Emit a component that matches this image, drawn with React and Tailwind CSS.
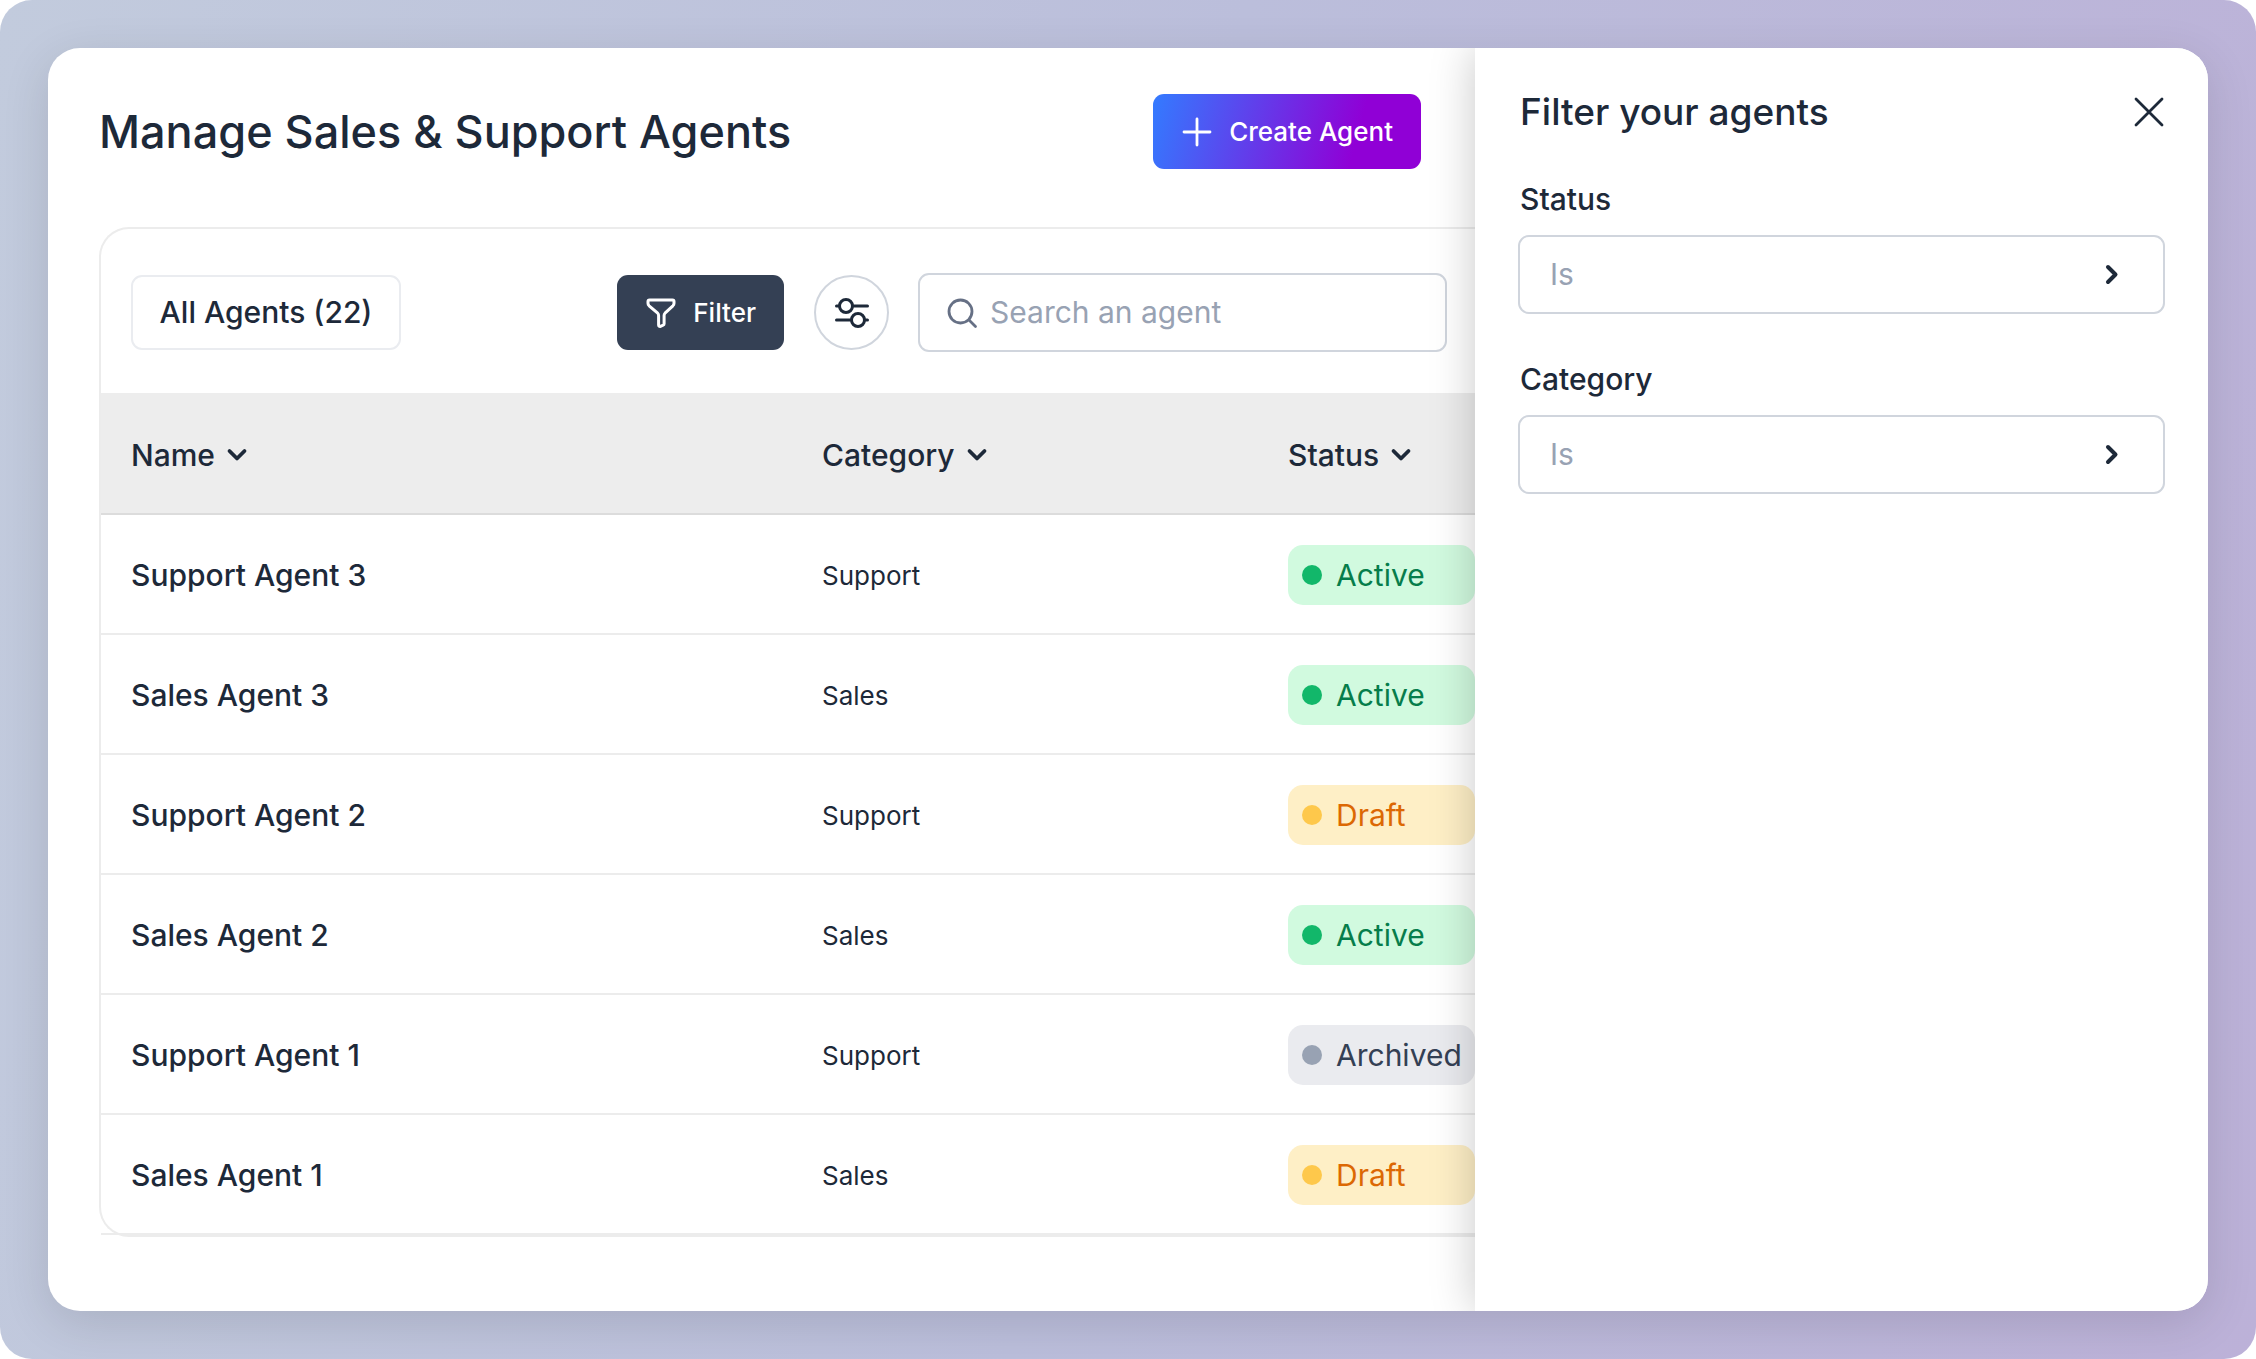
const columns = ['Name', 'Category', 'Status']

const agents = [
  { name: 'Support Agent 3', category: 'Support', status: 'Active' },
  { name: 'Sales Agent 3', category: 'Sales', status: 'Active' },
  { name: 'Support Agent 2', category: 'Support', status: 'Draft' },
  { name: 'Sales Agent 2', category: 'Sales', status: 'Active' },
  { name: 'Support Agent 1', category: 'Support', status: 'Archived' },
  { name: 'Sales Agent 1', category: 'Sales', status: 'Draft' },
]

const badgeStyles = {
  Active: { box: 'bg-[#d1fadf] text-[#067d4b]', dot: 'bg-[#12b76a]' },
  Draft: { box: 'bg-[#feefc6] text-[#dc6803]', dot: 'bg-[#fec84b]' },
  Archived: { box: 'bg-[#eaebef] text-[#344054]', dot: 'bg-[#98a2b3]' },
}

export default function App() {
  return (
    <div className="min-h-screen flex rounded-[32px] p-12 bg-[linear-gradient(100deg,#c2cbdd_0%,#bbbedb_50%,#bcb1d8_100%)] font-['Inter',sans-serif] text-[#1d2939]">
      <div className="flex-1 flex rounded-[32px] overflow-hidden bg-white shadow-[0_12px_48px_rgba(0,0,0,0.12)]">

        <main className="flex-1 min-w-0 pl-[51px]">
          <header className="flex items-center justify-between pt-[46px] pr-[54px]">
            <h1 className="text-[45px] leading-[60px] font-medium">Manage Sales &amp; Support Agents</h1>
            <button className="h-[75px] px-7 flex items-center gap-4 rounded-[11px] text-white text-[26px] font-medium bg-[linear-gradient(105deg,#337bff_0%,#9000d6_75%)]">
              <PlusIcon />
              Create Agent
            </button>
          </header>

          <section className="mt-[58px] border-2 border-r-0 border-[#ececec] rounded-l-[30px]">
            {/* Toolbar */}
            <div className="flex items-center pt-[44px] pb-[41px] pl-[30px] pr-7">
              <button className="h-[75px] w-[270px] rounded-[11px] border-2 border-[#eaecf0] text-[30px] font-medium">All Agents (22)</button>
              <button className="ml-auto h-[75px] px-7 flex items-center gap-4 rounded-[11px] bg-[#344054] text-white text-[26px] font-medium">
                <FunnelIcon />
                Filter
              </button>
              <button aria-label="Table settings" className="ml-[30px] size-[75px] grid place-items-center rounded-full border-2 border-[#d0d5dd]">
                <SlidersIcon />
              </button>
              <label className="ml-[29px] w-[529px] h-[79px] px-[26px] flex items-center gap-3 rounded-[11px] border-2 border-[#d0d5dd]">
                <SearchIcon />
                <input type="search" aria-label="Search an agent" placeholder="Search an agent" className="flex-1 min-w-0 text-[30px] outline-none placeholder:text-[#98a2b3]" />
              </label>
            </div>

            {/* Agents */}
            <table className="w-full table-fixed text-left">
              <colgroup>
                <col className="w-[691px]" />
                <col className="w-[496px]" />
                <col />
              </colgroup>
              <thead>
                <tr className="h-[121px] bg-[#ededed] border-b-2 border-[#dcdcdc]">
                  {columns.map((c, i) => (
                    <th key={c} className={`font-medium p-0 pt-1 ${i < 2 ? 'pl-[30px]' : ''}`}>
                      <button className="flex items-center gap-2.5 text-[30px]">
                        {c}
                        <ChevronIcon />
                      </button>
                    </th>
                  ))}
                </tr>
              </thead>
              <tbody>
                {agents.map((a) => (
                  <tr key={a.name} className="h-[120px] border-b-2 border-[#ececec]">
                    <td className="p-0 pt-0.5 pl-[30px] text-[30px] font-medium">{a.name}</td>
                    <td className="p-0 pt-0.5 pl-[30px] text-[26px]">{a.category}</td>
                    <td className="p-0 pt-0.5">
                      <StatusBadge status={a.status} />
                    </td>
                  </tr>
                ))}
              </tbody>
            </table>
          </section>
        </main>

        {/* Filter drawer */}
        <aside className="relative w-[733px] shrink-0 bg-white px-[43px] pt-9 shadow-[0_0_42px_rgba(0,0,0,0.22)]">
          <div className="flex items-center justify-between">
            <h2 className="pl-0.5 text-[37px] leading-[56px] font-medium">Filter your agents</h2>
            <button aria-label="Close">
              <CloseIcon />
            </button>
          </div>
          <div className="mt-[39px] flex flex-col gap-[45px]">
            <FilterField id="status" label="Status" />
            <FilterField id="category" label="Category" />
          </div>
        </aside>
      </div>
    </div>
  )
}

function StatusBadge({ status }) {
  const style = badgeStyles[status]
  return (
    <span className={`flex items-center gap-[14px] h-[60px] pl-[14px] rounded-[15px] text-[30px] ${style.box}`}>
      <span className={`size-5 rounded-full ${style.dot}`} />
      {status}
    </span>
  )
}

function FilterField({ id, label }) {
  return (
    <div>
      <label htmlFor={id} className="block pl-0.5 text-[30px] leading-[40px] font-medium">{label}</label>
      <button id={id} className="mt-4 w-full h-[79px] pl-[30px] pr-[36px] flex items-center justify-between rounded-[11px] border-2 border-[#d0d5dd] text-[30px] text-[#98a2b3]">
        Is
        <svg className="size-8 text-[#1d2939]" viewBox="0 0 32 32" fill="none" stroke="currentColor" strokeWidth="4" strokeLinecap="round" strokeLinejoin="round">
          <path d="M13 8l7.500 7.500L13 23" />
        </svg>
      </button>
    </div>
  )
}

function ChevronIcon() {
  return (
    <svg className="size-6" viewBox="0 0 24 24" fill="none" stroke="currentColor" strokeWidth="3.8" strokeLinecap="round" strokeLinejoin="round">
      <path d="M4.500 8l7.500 7.500L19.500 8" />
    </svg>
  )
}

function PlusIcon() {
  return (
    <svg className="size-8" viewBox="0 0 32 32" fill="none" stroke="currentColor" strokeWidth="2.800" strokeLinecap="round">
      <path d="M16 3v26M3 16h26" />
    </svg>
  )
}

function FunnelIcon() {
  return (
    <svg className="size-8" viewBox="0 0 32 32" fill="none" stroke="currentColor" strokeWidth="3" strokeLinejoin="round">
      <path d="M4.500 3h23c1 0 1.500.5 1.500 1.500v1.700c0 1-.4 1.900-1.100 2.600L20 16.200c-.6.600-.9 1.300-.9 2.200v8.300c0 .7-.4 1.200-1 1.500l-2.600 1.100c-1 .4-1.900-.2-1.900-1.200V18.400c0-.9-.3-1.600-.9-2.200L4.100 8.800C3.400 8.100 3 7.200 3 6.200V4.500C3 3.500 3.500 3 4.500 3z" />
    </svg>
  )
}

function SlidersIcon() {
  return (
    <svg className="size-9" viewBox="0 0 36 36" fill="none" stroke="currentColor" strokeWidth="3" strokeLinecap="round">
      <circle cx="12" cy="11" r="6.500" />
      <circle cx="24" cy="25" r="6.500" />
      <path d="M2.500 11H5M19 11h14.500M2.500 25H17M31 25h2.500" />
    </svg>
  )
}

function SearchIcon() {
  return (
    <svg className="size-8 text-[#667085]" viewBox="0 0 32 32" fill="none" stroke="currentColor" strokeWidth="2.800" strokeLinecap="round">
      <circle cx="14.500" cy="14.500" r="11.500" />
      <path d="M23 23l6.500 6.500" />
    </svg>
  )
}

function CloseIcon() {
  return (
    <svg className="size-8" viewBox="0 0 32 32" fill="none" stroke="currentColor" strokeWidth="2.800" strokeLinecap="round">
      <path d="M3 3l26 26M29 3L3 29" />
    </svg>
  )
}
